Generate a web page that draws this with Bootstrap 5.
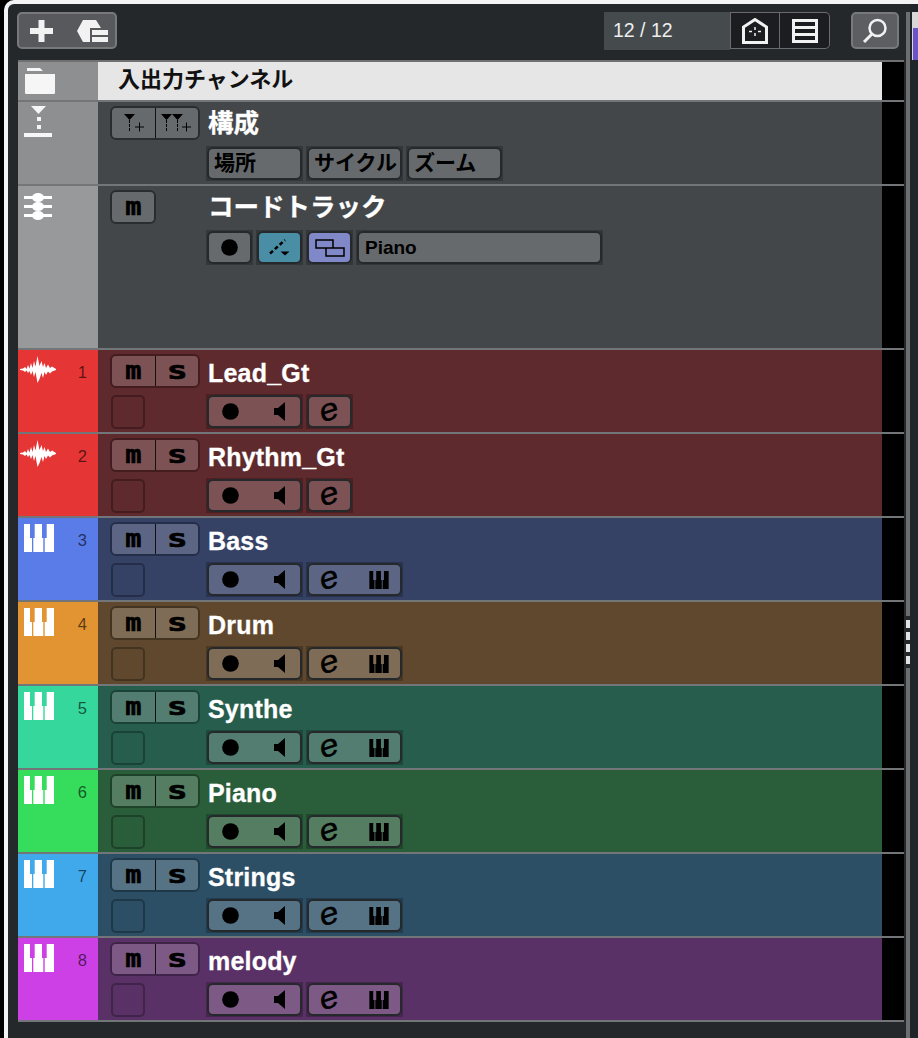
<!DOCTYPE html>
<html lang="ja">
<head>
    <meta charset="UTF-8">
    <meta name="viewport" content="width=device-width">
    <link href="https://cdn.jsdelivr.net/npm/bootstrap@5.3.3/dist/css/bootstrap.min.css" rel="stylesheet">
    <title>トラックリスト</title>
    <style>
        html, body { height: 100%; }
        body { background: #000; overflow: hidden; font-family: "Liberation Sans", "Noto Sans CJK JP", sans-serif; }
        .win { height: 1038px; margin-left: 4px; padding: 4px 0 0 4px; background: #f4f4f4; border-top-left-radius: 10px; }
        .win-in { height: 100%; background: #24282b; border-top-left-radius: 6px; }
        .main-col { width: 896px; padding-left: 10px; }
        .toolbar { height: 56px; padding-top: 8px; }
        .tb-group { height: 37px; width: 100px; margin-left: -1px; padding: 0 7px 0 11px; background: #57595c; border: 2px solid #77797b; border-radius: 5px; }
        .tb-count { width: 126px; height: 38px; margin-left: 487px; background: #454a4d; color: #eee; font-size: 19.5px; padding-left: 9px; line-height: 36px; }
        .tb-dark { width: 50px; height: 37px; background: #1c1d21; border: 1px solid #6b6b6b; }
        .tb-dark + .tb-dark { border-left: 0; border-radius: 0 5px 5px 0; }
        .tb-search { width: 48px; height: 37px; margin-left: 21px; background: #5c5e61; border: 2px solid #77797b; border-radius: 5px; }
        .trk { height: 84px; border-top: 2px solid #737678; }
        .trk-head { height: 40px; border-top: 2px solid #6e7072; }
        .trk-tall { height: 164px; }
        .trk-left { width: 80px; padding: 3px 4px 0 6px; color: rgba(0,0,0,.62); font-size: 16.5px; }
        .trk-left-gray { background: #8d8f91; }
        .trk-left-num { padding-top: 6px; }
        .trk-left-wave { padding-left: 2px; }
        .trk-main { width: 784px; isolation: isolate; }
        .trk-gap { width: 22px; background: #000; }
        .trk-end { height: 2px; width: 886px; background: #737678; }
        .head-title { background: #e6e6e6; color: #111; font-weight: 700; font-size: 22px; padding-left: 20px; line-height: 31px; font-family: "Noto Sans CJK JP", sans-serif; }
        .ctl-col { width: 109px; padding: 4px 0 0 12px; }
        .ctl-body { padding-top: 4px; }
        .name-row { height: 41px; }
        .trk-name { color: #fff; font-weight: 700; font-size: 25px; line-height: 39px; padding-left: 1px; letter-spacing: .2px; -webkit-text-stroke: .3px #fff; }
        .cjk-name { font-family: "Noto Sans CJK JP", sans-serif; font-size: 25.5px; line-height: 29px; letter-spacing: 0; }
        .sm-pair { width: 90px; height: 34px; border: 2px solid var(--edge); border-radius: 6px; background: var(--btn); color: #000; overflow: hidden; }
        .sm-one { width: 46px; }
        .sm-btn { flex: 1 1 0; font: 700 24px/30px "DejaVu Sans Mono", monospace; text-align: center; }
        .sm-btn + .sm-btn { border-left: 1px solid #111; }
        .sm-m { display: inline-block; transform: scaleX(1.12); -webkit-text-stroke: .6px #000; }
        .sm-s { display: inline-block; transform: scaleX(1.45); -webkit-text-stroke: .6px #000; }
        .tiny-sq { width: 34px; height: 34px; margin: 7px 0 0 1px; border: 2px solid var(--edge); border-radius: 5px; }
        .t-row { height: 33px; column-gap: 5px; }
        .t-btn { position: relative; height: 33px; border: 2px solid #26292b; border-radius: 6px; background: var(--btn); color: #000; }
        .t-btn::before { content: ""; position: absolute; inset: -3px -3px; background: rgba(0,0,0,.22); z-index: -1; }
        .w-rec { width: 95px; padding: 0 15px 0 13px; }
        .w-e { width: 45px; padding-left: 11px; }
        .w-ek { width: 95px; padding: 0 10px 0 11px; }
        .w-one { width: 45px; }
        .w-txt { font: 700 21px/25px "Noto Sans CJK JP", sans-serif; padding-left: 5px; width: 95px; white-space: nowrap; }
        .w-inst { width: 245px; font: 700 19px/30px "Liberation Sans", sans-serif; padding-left: 6px; }
        .e-txt { font: italic 400 31px/22px "Liberation Sans", sans-serif; display: block; margin-top: -3px; transform: rotate(-18deg) scaleX(1.1); -webkit-text-stroke: .4px #000; }
        .btn-cyan { --btn: #4a8ea6; }
        .btn-blue { --btn: #8088c8; }
        .scroll-col { width: 4px; margin: 8px 0 0 2px; background: #6d6e70; }
        .scroll-dots { height: 52px; margin-top: 604px; padding: 4px 0; background: #24282b; row-gap: 4px; }
        .scroll-dots i { display: block; width: 4px; height: 8px; background: #e2e2e2; }
        .side-col { width: 8px; padding-left: 2px; background: #1f2528; }
        .side-top { height: 48px; margin-top: 8px; padding: 16px 0 0 1px; background: #d8d8d8; }
        .side-purple { height: 32px; background: #6a54c8; }
        .num-cell { padding: 4px 7px 0 0; }
        .c-gray { --edge: #2a2d2f; --btn: #666a6d; background: #43474a; }
        .c-gray-l { background: #97999b; }
        .t-red { --edge: #421c1f; --btn: #7c5255; background: #5f2a2d; } .l-red { background: #e63535; }
        .t-blue { --edge: #252e49; --btn: #5c6684; background: #354266; } .l-blue { background: #5a7ce8; }
        .t-orange { --edge: #433321; --btn: #7f6c56; background: #5f482e; } .l-orange { background: #e29433; }
        .t-teal { --edge: #1b4236; --btn: #527d70; background: #275d4d; } .l-teal { background: #35d79c; }
        .t-green { --edge: #1e4229; --btn: #557d61; background: #2a5d3a; } .l-green { background: #36dd5c; }
        .t-sky { --edge: #1f3848; --btn: #567285; background: #2c4f66; } .l-sky { background: #3fa9ec; }
        .t-purple { --edge: #402348; --btn: #7c5a85; background: #5a3166; } .l-purple { background: #cc40e6; }
        svg { display: block; }
    </style>
</head>
<body>
<svg width="0" height="0" class="position-absolute">
    <symbol id="icoRec" viewBox="0 0 18 18"><circle cx="9" cy="9" r="8.800" fill="#000"/></symbol>
    <symbol id="icoSpk" viewBox="0 0 11 19"><path d="M0 6h4l7-6v19l-7-6H0z" fill="#000"/></symbol>
    <symbol id="icoWave" viewBox="0 0 36 27"><path d="M0 13L3 12.500 5 11 6.500 13 8 9 9.500 12.500 11 7 12.500 12 14 5 15.500 10.500 17.500 0 19.500 10 21.500 5 23 11 24.500 7 26 12 28 8.500 30 12 32 10.500 36 13 36 14 32 15.500 30 17.500 28 15.500 26 19 24.500 16 23 22 21.500 17 19.500 23 17.500 27 15.500 16 14 21 12.500 15 11 19 9.500 15 8 17 6.500 14.500 5 16 3 14.500 0 14z" fill="#fff"/></symbol>
    <symbol id="icoPiano" viewBox="0 0 30 28"><path d="M0 0h6v14h2v14H0zM10.700 0H18v14h1.300v14h-10V14h1.400zM22.700 0H30v28h-9.300V14h2z"/></symbol>
</svg>
<div class="win">
    <div class="win-in d-flex">
        <div class="main-col">
            <div class="toolbar d-flex">
                <div class="tb-group d-flex align-items-center justify-content-between">
                    <svg width="23" height="22" viewBox="0 0 23 22"><path d="M8.500 0h6v8H23v6h-8.500v8h-6v-8H0V8h8.500z" fill="#f2f2f2"/></svg>
                    <svg width="31" height="22" viewBox="0 0 31 22"><path d="M0 11L6 0h13l5 8H13v14H6z" fill="#f2f2f2"/><path d="M15 10h16v5H15zM15 17h16v5H15z" fill="#f2f2f2"/></svg>
                </div>
                <div class="tb-count">12 / 12</div>
                <div class="tb-dark d-flex align-items-center justify-content-center">
                    <svg width="26" height="26" viewBox="0 0 26 26"><path d="M1.500 24.500V9L13 1.500 24.500 9v15.500z" fill="none" stroke="#f2f2f2" stroke-width="3"/><path d="M13 9v3M13 15v3M7 13.500h3M16 13.500h3" stroke="#f2f2f2" stroke-width="1.500"/></svg>
                </div>
                <div class="tb-dark d-flex align-items-center justify-content-center">
                    <svg width="26" height="24" viewBox="0 0 26 24"><path d="M1.500 1.500h23v21h-23zM1.500 8.500h23M1.500 15.500h23" fill="none" stroke="#f2f2f2" stroke-width="3"/></svg>
                </div>
                <div class="tb-search d-flex align-items-center justify-content-center">
                    <svg width="26" height="26" viewBox="0 0 26 26"><circle cx="15.500" cy="10" r="8" fill="none" stroke="#f2f2f2" stroke-width="2.500"/><path d="M10 16l-8 8" stroke="#f2f2f2" stroke-width="3"/></svg>
                </div>
            </div>
            <div id="trackList"></div>
        </div>
        <div class="scroll-col"><div class="scroll-dots d-flex flex-column"><i></i><i></i><i></i><i></i></div></div>
        <div class="side-col"><div class="side-top"><div class="side-purple"></div></div></div>
    </div>
</div>
<script>
    const trackList = document.getElementById('trackList')
    const tracks = [
        { name: 'Lead_Gt', cls: 'red', type: 'audio' },
        { name: 'Rhythm_Gt', cls: 'red', type: 'audio' },
        { name: 'Bass', cls: 'blue', type: 'inst' },
        { name: 'Drum', cls: 'orange', type: 'inst' },
        { name: 'Synthe', cls: 'teal', type: 'inst' },
        { name: 'Piano', cls: 'green', type: 'inst' },
        { name: 'Strings', cls: 'sky', type: 'inst' },
        { name: 'melody', cls: 'purple', type: 'inst' }
    ]
    const recIcon = '<svg width="17" height="17"><use href="#icoRec"/></svg>'
    const spkIcon = '<svg width="11" height="19"><use href="#icoSpk"/></svg>'
    const keysIcon = '<svg width="22" height="18" fill="#000"><use href="#icoPiano"/></svg>'

    let html = `
    <div class="trk-head d-flex">
        <div class="trk-left trk-left-gray">
            <svg width="32" height="30" viewBox="0 0 32 30"><path d="M3 3h13l3 3H3zM1 9h30v19a1 1 0 0 1-1 1H2a1 1 0 0 1-1-1z" fill="#f6f6f6"/></svg>
        </div>
        <div class="head-title trk-main">入出力チャンネル</div>
        <div class="trk-gap"></div>
    </div>
    <div class="trk d-flex">
        <div class="trk-left trk-left-gray">
            <svg width="30" height="34" viewBox="0 0 30 34"><path d="M7 1h15l-7.500 8zM13 12h4v4h-4zM13 20h4v4h-4zM0 28h28v4H0z" fill="#f6f6f6"/></svg>
        </div>
        <div class="trk-main c-gray d-flex">
            <div class="ctl-col">
                <div class="sm-pair d-flex">
                    <div class="sm-btn d-flex align-items-center justify-content-center"><svg width="28" height="22" viewBox="0 0 28 22"><path d="M5 2h11l-5.500 6z" fill="#000"/><path d="M10.500 8v11" stroke="#000" stroke-dasharray="3 1"/><path d="M16 15h9M20.500 10.500v9" stroke="#000"/></svg></div>
                    <div class="sm-btn d-flex align-items-center justify-content-center"><svg width="34" height="22" viewBox="0 0 34 22"><path d="M1 2h11l-5.500 6zM12 2h11l-5.500 6z" fill="#000"/><path d="M6.500 8v11M17.500 8v11" stroke="#000" stroke-dasharray="3 1"/><path d="M22 15h9M26.500 10.500v9" stroke="#000"/></svg></div>
                </div>
            </div>
            <div class="ctl-body">
                <div class="trk-name cjk-name name-row">構成</div>
                <div class="t-row d-flex">
                    <div class="t-btn w-txt">場所</div>
                    <div class="t-btn w-txt">サイクル</div>
                    <div class="t-btn w-txt">ズーム</div>
                </div>
            </div>
        </div>
        <div class="trk-gap"></div>
    </div>
    <div class="trk trk-tall d-flex">
        <div class="trk-left c-gray-l">
            <svg width="30" height="30" viewBox="0 0 30 30" class="mt-1"><path d="M0 3h28v3H0zM0 12h28v3H0zM0 21h28v3H0z" fill="#fff"/><ellipse cx="14" cy="4.500" rx="6" ry="4.500" fill="#fff"/><ellipse cx="14" cy="13.500" rx="6" ry="4.500" fill="#fff"/><ellipse cx="14" cy="22.500" rx="6" ry="4.500" fill="#fff"/></svg>
        </div>
        <div class="trk-main c-gray d-flex">
            <div class="ctl-col">
                <div class="sm-pair sm-one d-flex"><div class="sm-btn"><span class="sm-m">m</span></div></div>
            </div>
            <div class="ctl-body">
                <div class="trk-name cjk-name name-row">コードトラック</div>
                <div class="t-row d-flex">
                    <div class="t-btn w-one d-flex align-items-center justify-content-center">${recIcon}</div>
                    <div class="t-btn w-one btn-cyan d-flex align-items-center justify-content-center">
                        <svg width="21" height="17" viewBox="0 0 21 17"><path d="M1 14.500L16 1" stroke="#000" stroke-width="2.500" stroke-dasharray="4 2.500"/><path d="M11.500 12.500h9L16 16.500z" fill="#000"/></svg>
                    </div>
                    <div class="t-btn w-one btn-blue d-flex align-items-center justify-content-center">
                        <svg width="30" height="18" viewBox="0 0 30 18"><path d="M1 1h17v8H1zM11 9h18v8H11z" fill="none" stroke="#000" stroke-width="1.500"/></svg>
                    </div>
                    <div class="t-btn w-inst w-txt">Piano</div>
                </div>
            </div>
        </div>
        <div class="trk-gap"></div>
    </div>`

    tracks.forEach((t, i) => {
        const ico = t.type === 'audio'
            ? '<svg width="36" height="27"><use href="#icoWave"/></svg>'
            : '<svg width="30" height="28" fill="#fff"><use href="#icoPiano"/></svg>'
        html += `
    <div class="trk d-flex">
        <div class="trk-left trk-left-num l-${t.cls} ${t.type === 'audio' ? 'trk-left-wave' : ''} d-flex justify-content-between">
            <div>${ico}</div>
            <div class="num-cell">${i + 1}</div>
        </div>
        <div class="trk-main t-${t.cls} d-flex">
            <div class="ctl-col">
                <div class="sm-pair d-flex"><div class="sm-btn"><span class="sm-m">m</span></div><div class="sm-btn"><span class="sm-s">s</span></div></div>
                <div class="tiny-sq"></div>
            </div>
            <div class="ctl-body">
                <div class="trk-name name-row">${t.name}</div>
                <div class="t-row d-flex">
                    <div class="t-btn w-rec d-flex align-items-center justify-content-between">${recIcon}${spkIcon}</div>
                    <div class="t-btn ${t.type === 'audio' ? 'w-e' : 'w-ek'} d-flex align-items-center justify-content-between">
                        <span class="e-txt">e</span>${t.type === 'audio' ? '' : keysIcon}
                    </div>
                </div>
            </div>
        </div>
        <div class="trk-gap"></div>
    </div>`
    })
    html += '<div class="trk-end"></div>'
    trackList.innerHTML = html
</script>
<script src="https://cdn.jsdelivr.net/npm/bootstrap@5.3.3/dist/js/bootstrap.bundle.min.js"></script>
</body>
</html>
